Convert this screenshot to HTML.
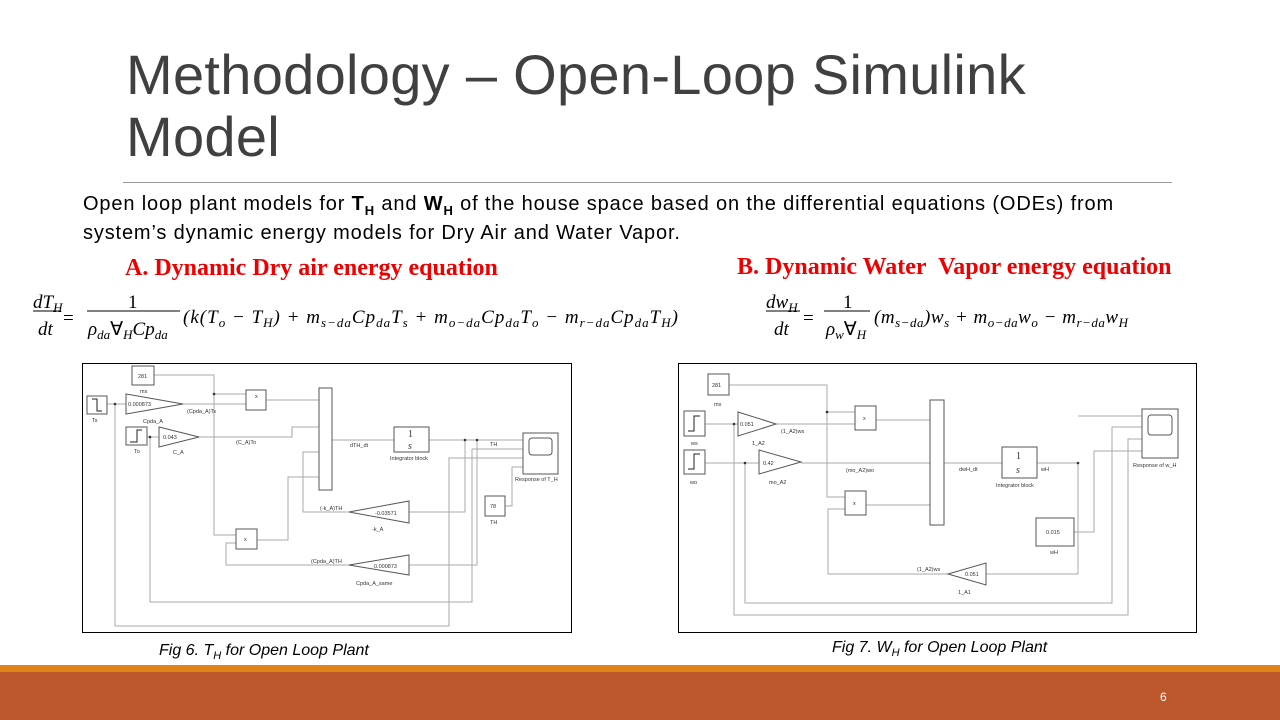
<!DOCTYPE html>
<html><head><meta charset="utf-8"><style>
body{margin:0;width:1280px;height:720px;position:relative;overflow:hidden;background:#fff;font-family:"Liberation Sans",sans-serif}
.t{position:absolute;white-space:nowrap}
sub{line-height:0}
</style></head><body>
<div class="t" style="left:126px;top:44px;font-size:56px;color:#404040;line-height:62px;letter-spacing:0.3px">Methodology – Open-Loop Simulink<br>Model</div>
<div style="position:absolute;left:123px;top:182px;width:1049px;height:1px;background:#999"></div>
<div class="t" style="left:83px;top:190px;font-size:20px;line-height:29px;color:#000;letter-spacing:0.85px">Open loop plant models for <b>T<sub style="font-size:13px">H</sub></b> and <b>W<sub style="font-size:13px">H</sub></b> of the house space based on the differential equations (ODEs) from<br>system’s dynamic energy models for Dry Air and Water Vapor.</div>
<div class="t" style="left:125px;top:255px;font-family:'Liberation Serif',serif;font-weight:bold;font-size:24px;color:#e00">A. Dynamic Dry air energy equation</div>
<div class="t" style="left:737px;top:254px;font-family:'Liberation Serif',serif;font-weight:bold;font-size:24px;color:#e00">B. Dynamic Water&nbsp; Vapor energy equation</div>
<svg style="position:absolute;left:0;top:280px" width="1280" height="70" font-family="Liberation Serif" font-style="italic" font-size="19">
<text x="33" y="28">dT<tspan font-size="13" dy="4">H</tspan></text>
<line x1="33" y1="31" x2="61" y2="31" stroke="#000"/>
<text x="38" y="55">dt</text>
<text x="63" y="44" font-style="normal">=</text>
<text x="128" y="28" font-style="normal">1</text>
<line x1="87" y1="31" x2="180" y2="31" stroke="#000"/>
<text x="88" y="55">ρ<tspan font-size="13" dy="4">da</tspan><tspan dy="-4" font-style="normal">∀</tspan><tspan font-size="13" dy="4">H</tspan><tspan dy="-4">Cp</tspan><tspan font-size="13" dy="4">da</tspan></text>
<text x="183" y="43" textLength="495">(k(T<tspan font-size="13" dy="4">o</tspan><tspan dy="-4"> − T</tspan><tspan font-size="13" dy="4">H</tspan><tspan dy="-4">) + m</tspan><tspan font-size="13" dy="4">s−da</tspan><tspan dy="-4">Cp</tspan><tspan font-size="13" dy="4">da</tspan><tspan dy="-4">T</tspan><tspan font-size="13" dy="4">s</tspan><tspan dy="-4"> + m</tspan><tspan font-size="13" dy="4">o−da</tspan><tspan dy="-4">Cp</tspan><tspan font-size="13" dy="4">da</tspan><tspan dy="-4">T</tspan><tspan font-size="13" dy="4">o</tspan><tspan dy="-4"> − m</tspan><tspan font-size="13" dy="4">r−da</tspan><tspan dy="-4">Cp</tspan><tspan font-size="13" dy="4">da</tspan><tspan dy="-4">T</tspan><tspan font-size="13" dy="4">H</tspan><tspan dy="-4">)</tspan></text>
<text x="766" y="28">dw<tspan font-size="13" dy="4">H</tspan></text>
<line x1="766" y1="31" x2="800" y2="31" stroke="#000"/>
<text x="774" y="55">dt</text>
<text x="803" y="44" font-style="normal">=</text>
<text x="843" y="28" font-style="normal">1</text>
<line x1="824" y1="31" x2="870" y2="31" stroke="#000"/>
<text x="826" y="55">ρ<tspan font-size="13" dy="4">w</tspan><tspan dy="-4" font-style="normal">∀</tspan><tspan font-size="13" dy="4">H</tspan></text>
<text x="874" y="43" textLength="254">(m<tspan font-size="13" dy="4">s−da</tspan><tspan dy="-4">)w</tspan><tspan font-size="13" dy="4">s</tspan><tspan dy="-4"> + m</tspan><tspan font-size="13" dy="4">o−da</tspan><tspan dy="-4">w</tspan><tspan font-size="13" dy="4">o</tspan><tspan dy="-4"> − m</tspan><tspan font-size="13" dy="4">r−da</tspan><tspan dy="-4">w</tspan><tspan font-size="13" dy="4">H</tspan></text>
</svg>

<svg style="position:absolute;left:80px;top:360px" width="495" height="275" font-family="Liberation Sans" font-size="5.5" fill="none" stroke="#aaa" stroke-width="1">
<rect x="2.5" y="3.5" width="489" height="269" stroke="#000" stroke-width="1"/>
<g>
<polyline points="74,15 134,15 134,34 166,34"/>
<polyline points="27,44 46,44"/><polyline points="103,44 166,44"/>
<polyline points="186,40 239,40"/>
<polyline points="67,77 79,77"/><polyline points="119,77 212,77 212,67 239,67"/>
<polyline points="252,80 314,80"/><polyline points="349,80 443,80"/>
<polyline points="134,34 134,175 156,175"/>
<polyline points="177,180 208,180 208,117 239,117"/>
<polyline points="269,152 223,152 223,92 239,92"/>
<polyline points="269,205 146,205 146,183 156,183"/>
<polyline points="385,80 385,152 329,152"/>
<polyline points="397,80 397,205 329,205"/>
<polyline points="392,89 443,89"/>
<polyline points="35,44 35,266 369,266 369,98 443,98"/>
<polyline points="70,77 70,242 392,242 392,89"/>
<polyline points="425,146 432,146 432,107 443,107"/>
</g>
<g stroke="#555" fill="#fff">
<rect x="52" y="6" width="22" height="19"/><rect x="7" y="36" width="20" height="18"/><rect x="46" y="67" width="21" height="18"/>
<polygon points="46,34 103,44 46,54"/><polygon points="79,67 119,77 79,87"/>
<rect x="166" y="30" width="20" height="20"/><rect x="239" y="28" width="13" height="102"/>
<rect x="314" y="67" width="35" height="25"/><rect x="443" y="73" width="35" height="41"/>
<rect x="449" y="78" width="23" height="17" rx="3"/>
<rect x="405" y="136" width="20" height="20"/>
<polygon points="269,152 329,141 329,163"/><rect x="156" y="169" width="21" height="20"/>
<polygon points="269,205 329,195 329,215"/>
</g>
<polyline points="12,39 17,39 17,51 22,51" stroke="#222"/><polyline points="50,82 57,82 57,70 62,70" stroke="#222"/>
<g fill="#333" stroke="none">
<circle cx="35" cy="44" r="1.3"/><circle cx="70" cy="77" r="1.3"/><circle cx="134" cy="34" r="1.3"/><circle cx="385" cy="80" r="1.3"/><circle cx="397" cy="80" r="1.3"/>
<text x="58" y="18">281</text><text x="60" y="33">ms</text><text x="12" y="62">Ts</text><text x="48" y="46">0.000873</text><text x="63" y="63">Cpda_A</text>
<text x="54" y="93">To</text><text x="83" y="79">0.043</text><text x="93" y="94">C_A</text>
<text x="107" y="53">(Cpda_A)Ts</text><text x="156" y="84">(C_A)To</text><text x="175" y="38">x</text><text x="164" y="181">x</text>
<text x="270" y="87">dTH_dt</text><text x="410" y="86">TH</text><text x="310" y="100">Integrator block</text><text x="435" y="121">Response of T_H</text>
<text x="410" y="148">78</text><text x="410" y="164">TH</text>
<text x="240" y="150">(-k_A)TH</text><text x="295" y="155">-0.03571</text><text x="292" y="171">-k_A</text>
<text x="231" y="203">(Cpda_A)TH</text><text x="294" y="208">0.000873</text><text x="276" y="225">Cpda_A_same</text>
<text x="328" y="77" font-family="Liberation Serif" font-size="10">1</text><text x="328" y="89" font-family="Liberation Serif" font-style="italic" font-size="10">s</text>
</g>
</svg>

<svg style="position:absolute;left:676px;top:360px" width="524" height="275" font-family="Liberation Sans" font-size="5.5" fill="none" stroke="#aaa" stroke-width="1">
<rect x="2.5" y="3.5" width="518" height="269" stroke="#000" stroke-width="1"/>
<polyline points="53,25 151,25 151,52 179,52"/>
<polyline points="29,64 62,64"/><polyline points="100,64 179,64"/>
<polyline points="200,60 254,60"/>
<polyline points="29,103 83,103"/><polyline points="125,103 254,103"/>
<polyline points="151,52 151,137 169,137"/>
<polyline points="190,145 254,145"/>
<polyline points="268,103 326,103"/><polyline points="361,103 402,103"/>
<polyline points="402,103 402,214 310,214"/><polyline points="272,214 152,214 152,149 169,149"/>
<polyline points="402,56 466,56"/>
<polyline points="58,64 58,255 452,255 452,79 466,79"/>
<polyline points="69,103 69,243 436,243 436,67 466,67"/>
<polyline points="398,172 418,172 418,91 466,91"/>
<g stroke="#555" fill="#fff">
<rect x="32" y="14" width="21" height="21"/><rect x="8" y="51" width="21" height="25"/><rect x="8" y="90" width="21" height="24"/>
<polygon points="62,52 100,64 62,76"/><polygon points="83,90 125,102 83,114"/>
<rect x="179" y="46" width="21" height="24"/><rect x="169" y="131" width="21" height="24"/>
<rect x="254" y="40" width="14" height="125"/><rect x="326" y="87" width="35" height="31"/>
<rect x="466" y="49" width="36" height="49"/><rect x="472" y="55" width="24" height="20" rx="3"/>
<rect x="360" y="158" width="38" height="28"/><polygon points="272,214 310,203 310,225"/>
</g>
<polyline points="12,71 18,71 18,56 24,56" stroke="#222"/><polyline points="12,109 18,109 18,94 24,94" stroke="#222"/>
<g fill="#333" stroke="none">
<circle cx="58" cy="64" r="1.3"/><circle cx="69" cy="103" r="1.3"/><circle cx="151" cy="52" r="1.3"/><circle cx="402" cy="103" r="1.3"/>
<text x="36" y="27">281</text><text x="38" y="46">ms</text><text x="15" y="85">ws</text><text x="14" y="124">wo</text>
<text x="64" y="66">0.051</text><text x="76" y="85">1_A2</text><text x="87" y="105">0.42</text><text x="93" y="124">mo_A2</text>
<text x="105" y="73">(1_A2)ws</text><text x="170" y="112">(mo_A2)wo</text><text x="187" y="60">x</text><text x="177" y="145">x</text>
<text x="283" y="111">dwH_dt</text><text x="365" y="111">wH</text><text x="320" y="127">Integrator block</text><text x="457" y="107">Response of w_H</text>
<text x="370" y="174">0.015</text><text x="374" y="194">wH</text>
<text x="241" y="211">(1_A2)ws</text><text x="289" y="216">0.051</text><text x="282" y="234">1_A1</text>
<text x="340" y="99" font-family="Liberation Serif" font-size="10">1</text><text x="340" y="113" font-family="Liberation Serif" font-style="italic" font-size="10">s</text>
</g>
</svg>

<div class="t" style="left:159px;top:642px;font-size:16px;font-style:italic">Fig 6. <i>T<sub style="font-size:11px">H</sub></i> for Open Loop Plant</div>
<div class="t" style="left:832px;top:639px;font-size:16px;font-style:italic">Fig 7. <i>W<sub style="font-size:11px">H</sub></i> for Open Loop Plant</div>
<div style="position:absolute;left:0;top:665px;width:1280px;height:7px;background:#DF8517"></div>
<div style="position:absolute;left:0;top:672px;width:1280px;height:48px;background:#BC582C"></div>
<div class="t" style="left:1160px;top:690px;font-size:12px;color:#fff">6</div>
</body></html>
